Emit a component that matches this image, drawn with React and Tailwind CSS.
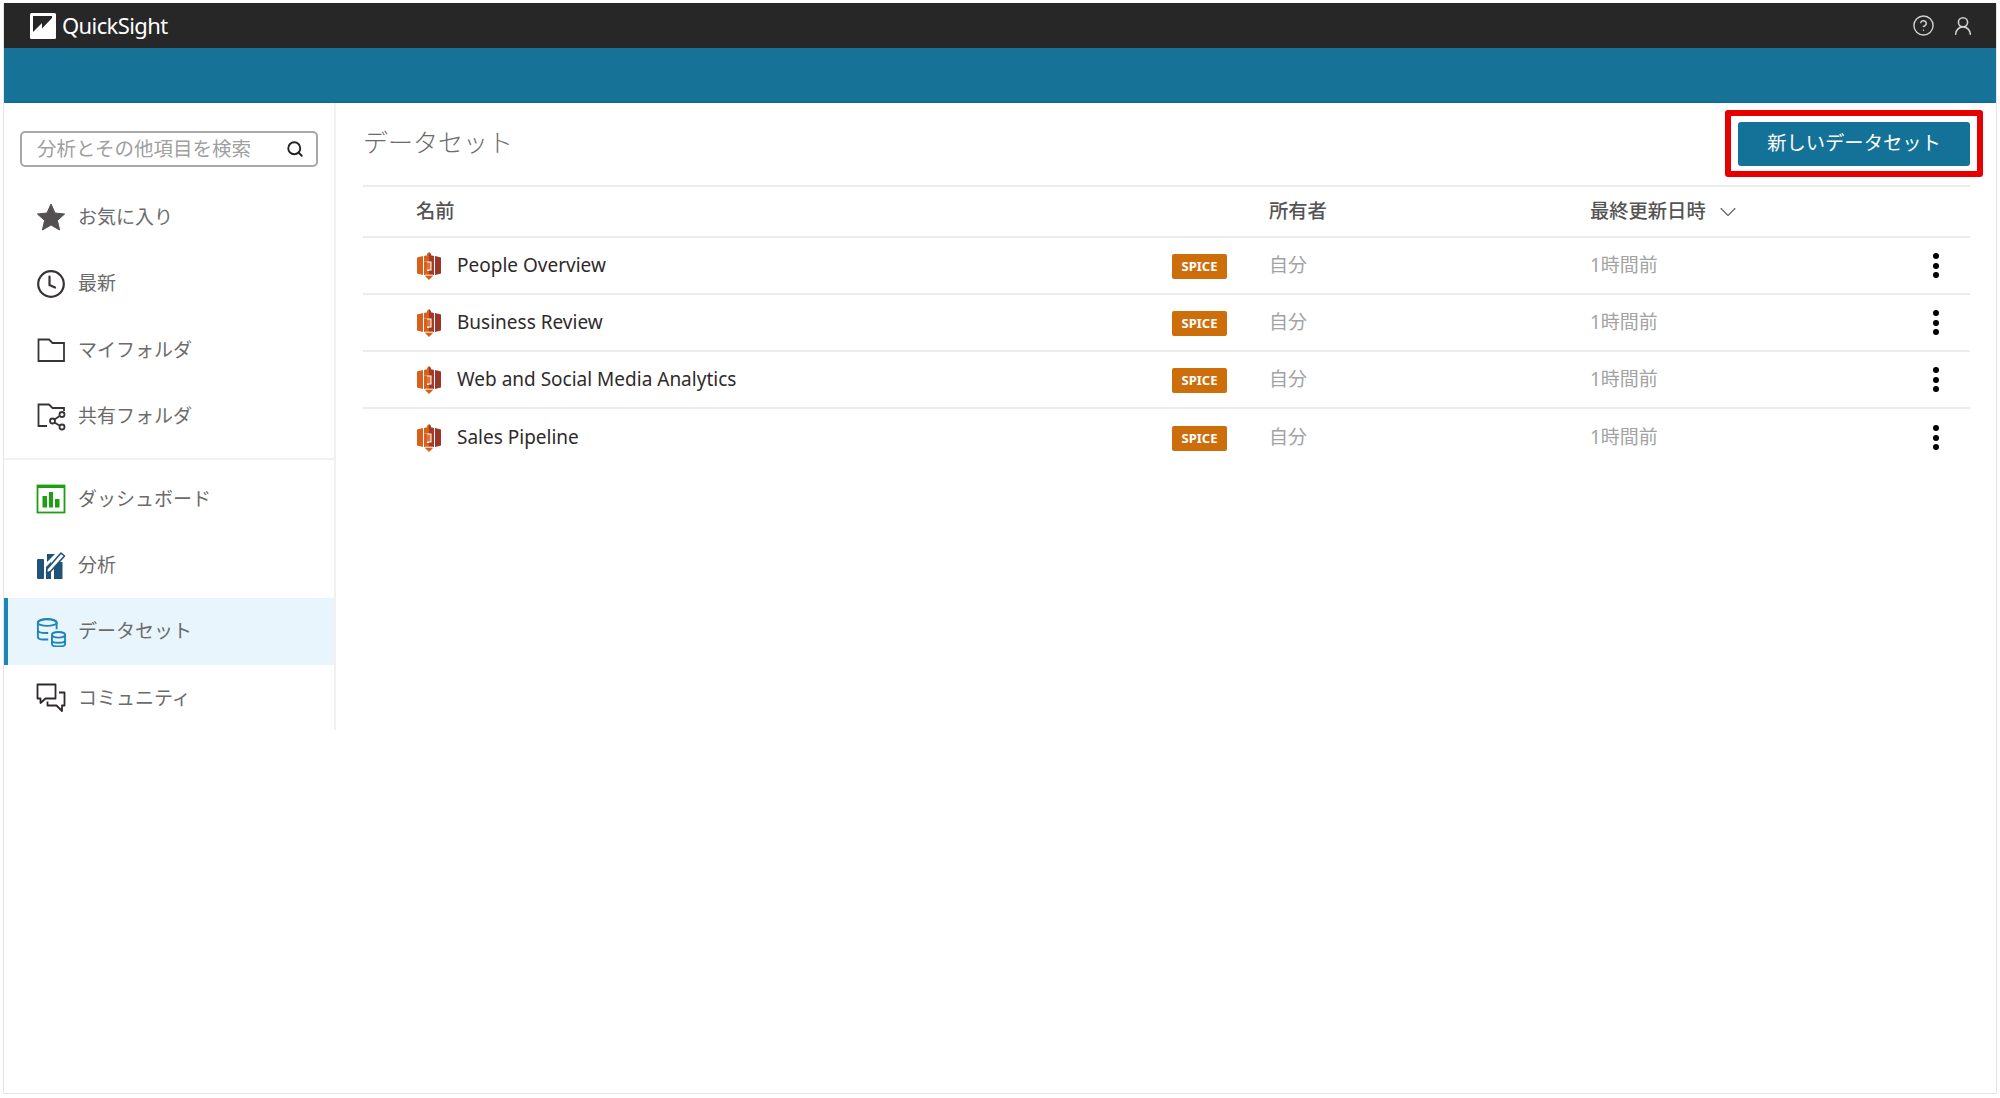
import { CircleHelp, UserRound, Search, ChevronDown } from "lucide-react";

const font = { fontFamily: '"Noto Sans", "Noto Sans CJK JP", sans-serif' };

function Logo() {
  return (
    <svg width="26" height="26" viewBox="0 0 26 26">
      <rect x="0" y="0" width="26" height="26" rx="1.5" fill="#fff" />
      <path d="M3 19 L12 10 L12 15.5 L22 5 L22 3 L3 3z" fill="#272727" />
    </svg>
  );
}

function Star() {
  return (
    <svg width="30" height="30" viewBox="0 0 30 30">
      <path d="M15 2l4 9 9.6 1-7.2 6.4 2.2 9.6L15 23l-8.600 5 2.200-9.600L1.400 12 11 11z" fill="#544f50" strokeLinejoin="round" stroke="#544f50" />
    </svg>
  );
}

function Clock() {
  return (
    <svg width="30" height="30" viewBox="0 0 30 30" fill="none" stroke="#3a3335" strokeWidth="2.200" strokeLinecap="round">
      <circle cx="15" cy="15" r="12.800" />
      <path d="M13.500 7.500v8.500l5.500 2.500" />
    </svg>
  );
}

function Folder() {
  return (
    <svg width="30" height="30" viewBox="0 0 30 30" fill="none" stroke="#3a3335" strokeWidth="1.800">
      <path d="M2.500 26V4.500h10.500l3.500 3.500H28V26z" />
    </svg>
  );
}

function SharedFolder() {
  return (
    <svg width="30" height="30" viewBox="0 0 30 30" fill="none" stroke="#3a3335" strokeWidth="1.800">
      <path d="M11 25H2.500V3.500h10.500l3.500 3.500H28v3" />
      <circle cx="26" cy="13.500" r="2.500" />
      <circle cx="16.500" cy="20" r="2.500" />
      <circle cx="26" cy="26" r="2.500" />
      <path d="M18.500 18.500l5.500-3.700M18.500 21.500l5.300 3.300" />
    </svg>
  );
}

function Dashboard() {
  return (
    <svg width="30" height="30" viewBox="0 0 30 30">
      <rect x="1.500" y="1.500" width="27" height="27" fill="#fff" stroke="#1d9f12" strokeWidth="1.800" />
      <rect x="1.500" y="1" width="27" height="3" fill="#1d9f12" />
      <rect x="6.500" y="12" width="4.500" height="11.500" fill="#1d9f12" />
      <rect x="13" y="8" width="4" height="15.500" fill="#1d9f12" />
      <rect x="19" y="15" width="4.500" height="8.500" fill="#1d9f12" />
    </svg>
  );
}

function Analysis() {
  return (
    <svg width="30" height="30" viewBox="0 0 30 30">
      <rect x="1" y="9" width="7" height="20" rx="1" fill="#1f5378" />
      <path d="M10 29V17l5-5v17z" fill="#1f5378" />
      <path d="M11 4h8l-8 8z" fill="#1f5378" />
      <path d="M18 29V15h-1l3-3h6.500v17z" fill="#1f5378" />
      <path d="M11 19L25 3l3.500 3L14.500 21.500 10.500 23z" fill="#fff" stroke="#1f5378" strokeWidth="1.600" strokeLinejoin="round" />
    </svg>
  );
}

function Dataset() {
  return (
    <svg width="30" height="30" viewBox="0 0 32 32" fill="none" stroke="#1c86b8" strokeWidth="2">
      <path d="M13 24H8c-3 0-6-1-6-3V6c0-2.500 5-4 10-4s10 1.500 10 4v7" />
      <ellipse cx="12" cy="6" rx="10" ry="3.500" />
      <path d="M2 14c0 2 4 3 9 3h2" />
      <ellipse cx="24" cy="19" rx="7" ry="3" />
      <path d="M17 19v10c0 1.500 3 2.500 7 2.500s7-1 7-2.500V19M17 25c0 1.500 3 2.500 7 2.500s7-1 7-2.500" />
    </svg>
  );
}

function Community() {
  return (
    <svg width="30" height="30" viewBox="0 0 30 30" fill="none" stroke="#2f282a" strokeWidth="1.800" strokeLinejoin="round">
      <path d="M1.500 1.500h18v14h-10l-5 4.500v-4.500h-3z" />
      <path d="M23 9.500h5.500v13h-2.500v5.500l-5.500-5.500h-9v-4" />
    </svg>
  );
}

function Spice() {
  return (
    <svg width="24" height="28" viewBox="0 0 24 28">
      <path d="M0 5.500l6-1.500v19l-6-1.500z" fill="#d9601a" />
      <path d="M24 5.500l-6-1.500v19l6-1.500z" fill="#9a3528" />
      <path d="M7 4l3-.800V2l2-2v9.500H7z" fill="#d9601a" />
      <path d="M12 0l2 2v1.200l3 .800v19h-5v-4.500h2.500V9.500H12z" fill="#a33a2a" />
      <path d="M7 9.500h3v9.500h2v4H7z" fill="#d9601a" />
      <rect x="10" y="10.500" width="3.500" height="7" fill="#d9763a" />
      <path d="M8 24h8l-4 4z" fill="#d9601a" />
      <rect x="8" y="22.500" width="8" height="1.500" fill="#f0c8a0" />
    </svg>
  );
}

const topNav = [
  { label: "お気に入り", icon: <Star /> },
  { label: "最新", icon: <Clock /> },
  { label: "マイフォルダ", icon: <Folder /> },
  { label: "共有フォルダ", icon: <SharedFolder /> },
];

const bottomNav = [
  { label: "ダッシュボード", icon: <Dashboard /> },
  { label: "分析", icon: <Analysis /> },
  { label: "データセット", icon: <Dataset />, active: true },
  { label: "コミュニティ", icon: <Community /> },
];

const rows = ["People Overview", "Business Review", "Web and Social Media Analytics", "Sales Pipeline"];

function NavItem({ item }) {
  return (
    <div
      className={
        "flex h-[66.4px] items-center gap-[12px] text-[19px] text-[#6b6b6b] " +
        (item.active ? "border-l-4 border-[#1c86b8] bg-[#e8f5fc] pl-[28px]" : "pl-[32px]")
      }
    >
      {item.icon}
      <span>{item.label}</span>
    </div>
  );
}

export default function App() {
  return (
    <div className="h-[1098px] w-[2000px] overflow-hidden bg-white pt-[3px] pr-[3px] pb-[4px] pl-[3px]" style={font}>
      <div className="flex h-full flex-col border-r border-b border-l border-[#e6e6e6]">
        <header className="flex h-[45px] items-center justify-between bg-[#272727] pr-[22px] pl-[26px]">
          <div className="flex items-center gap-[6px]">
            <Logo />
            <span className="text-[22px] tracking-[-0.6px] text-white">QuickSight</span>
          </div>
          <div className="flex items-center gap-[17px] text-[#cfcfcf]">
            <CircleHelp size={23} strokeWidth={1.500} />
            <UserRound size={22} strokeWidth={1.800} />
          </div>
        </header>
        <div className="h-[55px] border-b-2 border-[#0b6f98] bg-[#177298]" />

        <div className="flex flex-1">
          <aside className="h-[627px] w-[332px] border-r-2 border-[#f1f1f1]">
            <div className="px-[16px] pt-[28px] pb-[17px]">
              <div className="flex h-[36px] w-[298px] items-center justify-between rounded-[5px] border-2 border-[#a8a8a8] pr-[12px] pl-[15px]">
                <span className="text-[19.500px] text-[#a0a0a0]">分析とその他項目を検索</span>
                <Search size={18} strokeWidth={2.500} className="text-[#222]" />
              </div>
            </div>
            <div className="border-b-2 border-[#f1f1f1] pb-[8px]">
              {topNav.map((item) => (
                <NavItem key={item.label} item={item} />
              ))}
            </div>
            <div className="pt-[6px]">
              {bottomNav.map((item) => (
                <NavItem key={item.label} item={item} />
              ))}
            </div>
          </aside>

          <main className="flex-1 pr-[26px] pl-[27px]">
            <div className="flex h-[82px] items-center justify-between">
              <h1 className="-mt-[2px] text-[25px] font-light text-[#6b6b6b]">データセット</h1>
              <div className="-mt-[1px] -mr-[13px] rounded-[3px] border-[6px] border-[#e60000] px-[7px] py-[5.500px]">
                <button className="block h-[44px] w-[232px] rounded-[3px] bg-[#147298] text-[19.300px] text-white">
                  新しいデータセット
                </button>
              </div>
            </div>

            <div className="flex h-[53px] items-center border-t-2 border-b-2 border-[#ececec] text-[19.300px] font-medium text-[#545454]">
              <span className="w-[906px] pl-[53px]">名前</span>
              <span className="w-[321px]">所有者</span>
              <span className="flex items-center gap-[8px]">
                最終更新日時
                <ChevronDown size={28} strokeWidth={1} className="text-[#666]" />
              </span>
            </div>

            {rows.map((name) => (
              <div key={name} className="flex h-[57px] items-center border-b-2 border-[#ececec] text-[19px] last:border-b-0">
                <div className="flex w-[809px] items-center gap-[16px] pl-[54px]">
                  <Spice />
                  <span className="text-[#2f2a2b]">{name}</span>
                </div>
                <div className="w-[97px]">
                  <span className="mt-[2px] flex h-[25px] w-[55px] items-center justify-center rounded-[2px] bg-[#cc6f0a] text-[13px] font-bold text-white">
                    SPICE
                  </span>
                </div>
                <span className="w-[321px] text-[#a3a3a3]">自分</span>
                <span className="w-[343px] text-[#a3a3a3]">1時間前</span>
                <span className="flex flex-col gap-[3.500px]">
                  <span className="size-[6px] rounded-full bg-black" />
                  <span className="size-[6px] rounded-full bg-black" />
                  <span className="size-[6px] rounded-full bg-black" />
                </span>
              </div>
            ))}
          </main>
        </div>
      </div>
    </div>
  );
}
